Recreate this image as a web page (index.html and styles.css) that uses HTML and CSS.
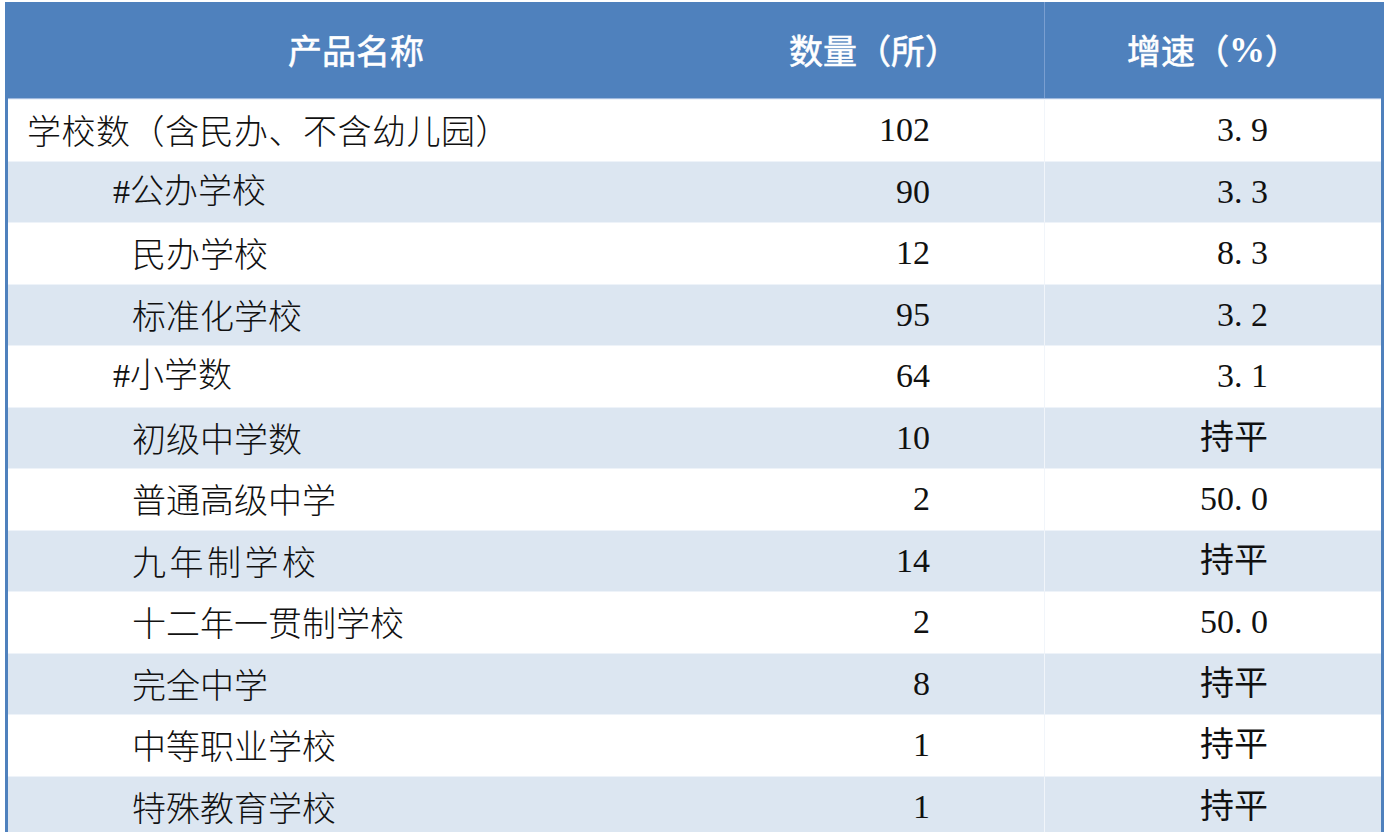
FILE: index.html
```html
<!DOCTYPE html>
<html lang="zh-CN">
<head>
<meta charset="utf-8">
<title>学校数</title>
<link rel="stylesheet" href="styles.css">
</head>
<body>
<div class="table">
  <div class="row head">
    <div class="cell c1">产品名称</div>
    <div class="cell c2">数量（所）</div>
    <div class="cell c3">增速（<span class="pct">%</span>）</div>
  </div>
  <div class="row">
    <div class="cell c1 lv1">学校数（含民办、不含幼儿园）</div>
    <div class="cell c2 num">102</div>
    <div class="cell c3 num">3. 9</div>
  </div>
  <div class="row alt">
    <div class="cell c1 lv2 hash">#公办学校</div>
    <div class="cell c2 num">90</div>
    <div class="cell c3 num">3. 3</div>
  </div>
  <div class="row">
    <div class="cell c1 lv2">民办学校</div>
    <div class="cell c2 num">12</div>
    <div class="cell c3 num">8. 3</div>
  </div>
  <div class="row alt">
    <div class="cell c1 lv2">标准化学校</div>
    <div class="cell c2 num">95</div>
    <div class="cell c3 num">3. 2</div>
  </div>
  <div class="row">
    <div class="cell c1 lv2 hash">#小学数</div>
    <div class="cell c2 num">64</div>
    <div class="cell c3 num">3. 1</div>
  </div>
  <div class="row alt">
    <div class="cell c1 lv2">初级中学数</div>
    <div class="cell c2 num">10</div>
    <div class="cell c3 num">持平</div>
  </div>
  <div class="row">
    <div class="cell c1 lv2">普通高级中学</div>
    <div class="cell c2 num">2</div>
    <div class="cell c3 num">50. 0</div>
  </div>
  <div class="row alt">
    <div class="cell c1 lv2 wide">九年制学校</div>
    <div class="cell c2 num">14</div>
    <div class="cell c3 num">持平</div>
  </div>
  <div class="row">
    <div class="cell c1 lv2">十二年一贯制学校</div>
    <div class="cell c2 num">2</div>
    <div class="cell c3 num">50. 0</div>
  </div>
  <div class="row alt">
    <div class="cell c1 lv2">完全中学</div>
    <div class="cell c2 num">8</div>
    <div class="cell c3 num">持平</div>
  </div>
  <div class="row">
    <div class="cell c1 lv2">中等职业学校</div>
    <div class="cell c2 num">1</div>
    <div class="cell c3 num">持平</div>
  </div>
  <div class="row alt">
    <div class="cell c1 lv2">特殊教育学校</div>
    <div class="cell c2 num">1</div>
    <div class="cell c3 num">持平</div>
  </div>
</div>
</body>
</html>
```

FILE: styles.css
```css
html, body {
  margin: 0;
  padding: 0;
  background: #ffffff;
}

body {
  padding: 2px 0 0 5px;
  overflow: hidden;
  height: 832px;
  box-sizing: border-box;
}

.table {
  width: 1379px;
  border-left: 3px solid #4f81bd;
  border-right: 3px solid #4f81bd;
  box-sizing: border-box;
  font-family: "Liberation Serif", "Noto Sans CJK SC", serif;
  font-size: 34px;
  color: #111111;
}

.row {
  display: grid;
  grid-template-columns: 696px 340px 337px;
  height: 61.5px;
  box-sizing: border-box;
  border-top: 1px solid #eef3f9;
  background: #ffffff;
}

.row.alt {
  background: #dce6f1;
}

.row.head {
  height: 97px;
  border-top: none;
  border-bottom: 1px solid #9fb9de;
  background: #4f81bd;
  color: #ffffff;
  font-family: "Noto Sans CJK SC", sans-serif;
  font-weight: 400;
  -webkit-text-stroke: 0.6px #ffffff;
}

.cell {
  display: flex;
  align-items: center;
  white-space: nowrap;
  line-height: 1;
}

.head .cell {
  justify-content: center;
}

.head .c3 {
  border-left: 1px solid #7a9fd1;
}

.pct {
  font-family: "Liberation Serif", serif;
  font-weight: 700;
  font-size: 36px;
  -webkit-text-stroke: 0;
}

.c3 {
  border-left: 1px solid #f1f5fa;
}

.lv1 {
  padding-left: 19px;
  font-family: "Noto Sans CJK SC", sans-serif;
  font-weight: 300;
  letter-spacing: 0.5px;
}

.lv2 {
  padding-left: 124px;
  font-family: "Noto Sans CJK SC", sans-serif;
  font-weight: 300;
}

.lv2.hash {
  padding-left: 105px;
  font-family: "Liberation Serif", "Noto Sans CJK SC", serif;
}

.wide {
  letter-spacing: 3.5px;
}

.num {
  justify-content: flex-end;
}

.c2.num {
  padding-right: 114px;
}

.c3.num {
  padding-right: 113px;
  font-family: "Liberation Serif", "Noto Sans CJK SC", serif;
  font-weight: 400;
}
```
